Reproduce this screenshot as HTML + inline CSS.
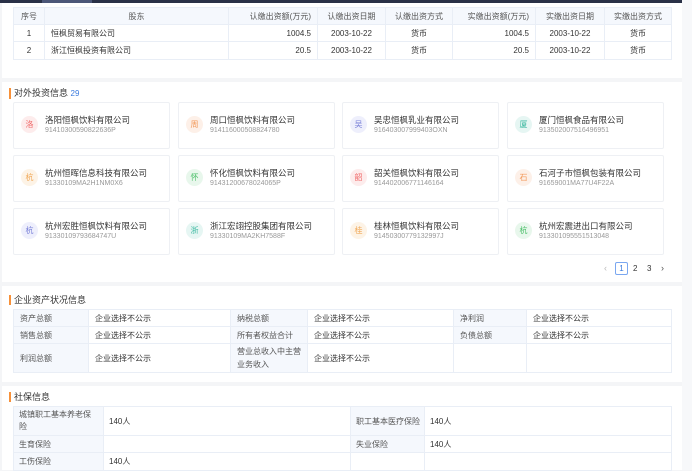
<!DOCTYPE html><html><head><meta charset="utf-8"><style>
*{margin:0;padding:0;box-sizing:border-box}
body{width:692px;height:470px;overflow:hidden;background:#f4f5f7;font-family:"Liberation Sans","Noto Sans CJK SC",sans-serif;font-size:8px;color:#333;position:relative}
.abs{position:absolute}
.panel{position:absolute;left:2px;width:680px;background:#fff}
table{border-collapse:collapse;position:absolute;table-layout:fixed}
td{border:1px solid #e9eef6;padding:0 6px;font-size:8px;color:#333}
.h td{background:#f5f8fd;color:#555;text-align:center}
.lb{background:#f5f8fd;color:#555}
.title{position:absolute;left:9px;font-size:9px;color:#333;border-left:2px solid #f7913a;padding-left:3px;line-height:10px}
.card{position:absolute;width:157px;height:47px;border:1px solid #eef0f4;border-radius:2px;background:#fff}
.av{position:absolute;left:7px;top:13px;width:17px;height:17px;border-radius:50%;font-size:8px;text-align:center;line-height:17px}
.nm{position:absolute;left:31px;top:11px;font-size:8.5px;color:#333;white-space:nowrap}
.cd{position:absolute;left:31px;top:24px;font-size:7px;color:#999;white-space:nowrap}
.sb td{padding:0 5px}
</style></head><body>
<div class="abs" style="left:0;top:0;width:692px;height:3px;background:#2a3147"></div>
<div class="abs" style="left:42px;top:0;width:50px;height:3px;background:#4c5778"></div>
<div class="abs" style="left:682px;top:0;width:10px;height:470px;background:#f7f8fa"></div>

<div class="panel" style="top:3px;height:75px"></div>
<table style="left:13px;top:7px;width:658px">
<colgroup><col style="width:31px"><col style="width:184px"><col style="width:89px"><col style="width:68px"><col style="width:67px"><col style="width:83px"><col style="width:69px"><col style="width:67px"></colgroup>
<tr class="h" style="height:17px"><td>序号</td><td>股东</td><td style="text-align:right">认缴出资额(万元)</td><td>认缴出资日期</td><td>认缴出资方式</td><td style="text-align:right">实缴出资额(万元)</td><td>实缴出资日期</td><td>实缴出资方式</td></tr>
<tr style="height:17px"><td style="text-align:center">1</td><td>恒枫贸易有限公司</td><td style="text-align:right">1004.5</td><td style="text-align:center">2003-10-22</td><td style="text-align:center">货币</td><td style="text-align:right">1004.5</td><td style="text-align:center">2003-10-22</td><td style="text-align:center">货币</td></tr>
<tr style="height:18px"><td style="text-align:center">2</td><td>浙江恒枫投资有限公司</td><td style="text-align:right">20.5</td><td style="text-align:center">2003-10-22</td><td style="text-align:center">货币</td><td style="text-align:right">20.5</td><td style="text-align:center">2003-10-22</td><td style="text-align:center">货币</td></tr>
</table>

<div class="panel" style="top:82px;height:200px"></div>
<div class="title" style="top:88px">对外投资信息 <span style="color:#3b7bde;font-size:8px">29</span></div>

<div class="card" style="left:13px;top:102px"><div class="av" style="background:#fdecec;color:#f06a6a">洛</div><div class="nm">洛阳恒枫饮料有限公司</div><div class="cd">91410300590822636P</div></div>
<div class="card" style="left:178px;top:102px"><div class="av" style="background:#fdf0e8;color:#f29a5c">周</div><div class="nm">周口恒枫饮料有限公司</div><div class="cd">914116000508824780</div></div>
<div class="card" style="left:342px;top:102px"><div class="av" style="background:#eeeffc;color:#7b82d8">吴</div><div class="nm">吴忠恒枫乳业有限公司</div><div class="cd">916403007999403OXN</div></div>
<div class="card" style="left:507px;top:102px"><div class="av" style="background:#e6f6f3;color:#3cb8a0">厦</div><div class="nm">厦门恒枫食品有限公司</div><div class="cd">913502007516496951</div></div>

<div class="card" style="left:13px;top:155px"><div class="av" style="background:#fdf3e6;color:#f0a95a">杭</div><div class="nm">杭州恒晖信息科技有限公司</div><div class="cd">91330109MA2H1NM0X6</div></div>
<div class="card" style="left:178px;top:155px"><div class="av" style="background:#e8f7ec;color:#4cbf6a">怀</div><div class="nm">怀化恒枫饮料有限公司</div><div class="cd">91431200678024065P</div></div>
<div class="card" style="left:342px;top:155px"><div class="av" style="background:#fdecec;color:#f06a6a">韶</div><div class="nm">韶关恒枫饮料有限公司</div><div class="cd">914402006771146164</div></div>
<div class="card" style="left:507px;top:155px"><div class="av" style="background:#fdf0e8;color:#f29a5c">石</div><div class="nm">石河子市恒枫包装有限公司</div><div class="cd">91659001MA77U4F22A</div></div>

<div class="card" style="left:13px;top:208px"><div class="av" style="background:#eeeffc;color:#7b82d8">杭</div><div class="nm">杭州宏胜恒枫饮料有限公司</div><div class="cd">91330109793684747U</div></div>
<div class="card" style="left:178px;top:208px"><div class="av" style="background:#e6f6f3;color:#3cb8a0">浙</div><div class="nm">浙江宏翊控股集团有限公司</div><div class="cd">91330109MA2KH7588F</div></div>
<div class="card" style="left:342px;top:208px"><div class="av" style="background:#fdf3e6;color:#f0a95a">桂</div><div class="nm">桂林恒枫饮料有限公司</div><div class="cd">91450300779132997J</div></div>
<div class="card" style="left:507px;top:208px"><div class="av" style="background:#e8f7ec;color:#4cbf6a">杭</div><div class="nm">杭州宏震进出口有限公司</div><div class="cd">913301095551513048</div></div>

<div class="abs" style="left:604px;top:263px;color:#bbb;font-size:9px">&#8249;</div>
<div class="abs" style="left:615px;top:262px;width:13px;height:13px;border:1px solid #7aa7f0;border-radius:2px;text-align:center;line-height:11px;color:#3b7bde;font-size:8px">1</div>
<div class="abs" style="left:633px;top:264px;color:#333;font-size:8px">2</div>
<div class="abs" style="left:647px;top:264px;color:#333;font-size:8px">3</div>
<div class="abs" style="left:661px;top:263px;color:#555;font-size:9px">&#8250;</div>

<div class="panel" style="top:286px;height:96px"></div>
<div class="title" style="top:295px">企业资产状况信息</div>
<table style="left:13px;top:309px;width:658px">
<colgroup><col style="width:75px"><col style="width:142px"><col style="width:77px"><col style="width:146px"><col style="width:73px"><col style="width:145px"></colgroup>
<tr style="height:17px"><td class="lb">资产总额</td><td>企业选择不公示</td><td class="lb">纳税总额</td><td>企业选择不公示</td><td class="lb">净利润</td><td>企业选择不公示</td></tr>
<tr style="height:17px"><td class="lb">销售总额</td><td>企业选择不公示</td><td class="lb">所有者权益合计</td><td>企业选择不公示</td><td class="lb">负债总额</td><td>企业选择不公示</td></tr>
<tr style="height:29px"><td class="lb">利润总额</td><td>企业选择不公示</td><td class="lb" style="line-height:13px">营业总收入中主营业务收入</td><td>企业选择不公示</td><td></td><td></td></tr>
</table>

<div class="panel" style="top:386px;height:84px"></div>
<div class="title" style="top:392px">社保信息</div>
<table class="sb" style="left:13px;top:406px;width:658px">
<colgroup><col style="width:90px"><col style="width:247px"><col style="width:74px"><col style="width:247px"></colgroup>
<tr style="height:29px"><td class="lb" style="line-height:12px">城镇职工基本养老保险</td><td>140人</td><td class="lb" style="white-space:nowrap">职工基本医疗保险</td><td>140人</td></tr>
<tr style="height:17px"><td class="lb">生育保险</td><td></td><td class="lb">失业保险</td><td>140人</td></tr>
<tr style="height:18px"><td class="lb">工伤保险</td><td>140人</td><td></td><td></td></tr>
</table>
</body></html>
